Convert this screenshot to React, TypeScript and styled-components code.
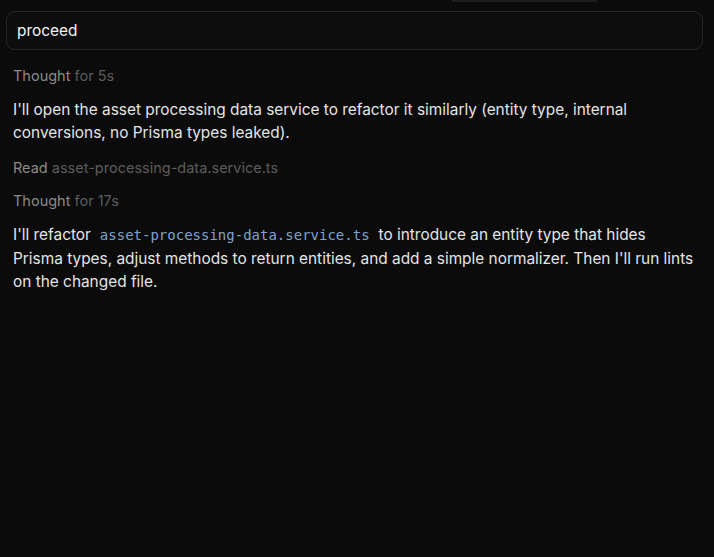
import styled, {createGlobalStyle} from "styled-components";

const GlobalStyle = createGlobalStyle`
  html, body {
    margin: 0;
    padding: 0;
    background: #0b0b0b;
  }
  body {
    font-family: Inter, "Noto Sans", "Liberation Sans", sans-serif;
    color: #e6e6e6;
    -webkit-font-smoothing: antialiased;
  }
`;

const Page = styled.div`
  width: 714px;
  height: 557px;
  box-sizing: border-box;
  background: #0b0b0b;
  display: flex;
  flex-direction: column;
`;

const TopStrip = styled.div`
  margin-left: 452px;
  width: 145px;
  height: 2px;
  background: #1d1d1d;
`;

const InputBox = styled.div`
  margin: 9px 11px 0 6px;
  height: 39px;
  box-sizing: border-box;
  border: 1px solid #262626;
  border-radius: 9px;
  background: #0d0d0d;
  display: flex;
  align-items: center;
  padding: 0 10px;
  font-size: 15.4px;
  color: #f2f2f2;
`;

const Feed = styled.div`
  display: flex;
  flex-direction: column;
  padding: 0 13px;
`;

const Meta = styled.div<{$top: number}>`
  margin-top: ${p => p.$top}px;
  font-size: 14.5px;
  line-height: 20px;
  color: #8a8a8a;

  span {
    color: #5c5c5c;
  }
`;

const Message = styled.p<{$top: number}>`
  margin: ${p => p.$top}px 0 0;
  font-size: 15.4px;
  line-height: 23px;
  color: #e4e4e4;
  width: 685px;
`;

const Code = styled.code`
  font-family: "DejaVu Sans Mono", "Liberation Mono", monospace;
  font-size: 14px;
  color: #7fa3c8;
  margin: 0 9px;
`;

export default function App() {
  return (
    <Page>
      <GlobalStyle/>
      <TopStrip/>
      <InputBox>proceed</InputBox>
      <Feed>
        <Meta $top={16}>Thought <span>for 5s</span></Meta>
        <Message $top={12}>
          I'll open the asset processing data service to refactor it similarly (entity type, internal<br/>
          conversions, no Prisma types leaked).
        </Message>
        <Meta $top={14}>Read <span>asset-processing-data.service.ts</span></Meta>
        <Meta $top={13}>Thought <span>for 17s</span></Meta>
        <Message $top={12}>
          I'll refactor<Code>asset-processing-data.service.ts</Code>to introduce an entity type that hides<br/>
          Prisma types, adjust methods to return entities, and add a simple normalizer. Then I'll run lints<br/>
          on the changed file.
        </Message>
      </Feed>
    </Page>
  );
}
